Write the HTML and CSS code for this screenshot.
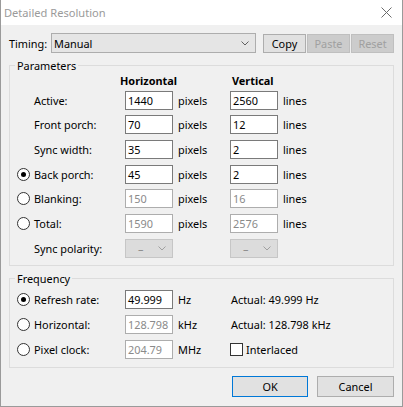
FILE: index.html
```html
<!DOCTYPE html>
<html>
<head>
<meta charset="utf-8">
<title>Detailed Resolution</title>
<link rel="stylesheet" href="styles.css">
</head>
<body>
<div class="window">
  <div class="titlebar">
    <span class="title">Detailed Resolution</span>
    <svg class="close" width="11" height="11" viewBox="0 0 11 11"><path d="M0.5 0.5 L10.5 10.5 M10.5 0.5 L0.5 10.5" stroke="#6b6b6b" stroke-width="1" fill="none"/></svg>
  </div>

  <div class="timing">
    <span class="timing-label">Timing:</span>
    <div class="combo combo-timing">
      <span class="combo-text">Manual</span>
      <svg class="chev" width="8" height="5" viewBox="0 0 8 5"><path d="M0.5 0.5 L4 4 L7.5 0.5" stroke="#606060" fill="none"/></svg>
    </div>
    <div class="tbtns">
      <div class="btn small">Copy</div>
      <div class="btn small disabled">Paste</div>
      <div class="btn small disabled">Reset</div>
    </div>
  </div>

  <fieldset class="group params">
    <legend>Parameters</legend>
    <div class="pgrid">
      <div></div><div></div><div class="head h1">Horizontal</div><div></div><div class="head h2">Vertical</div><div></div>

      <div></div><div class="lbl">Active:</div><div class="cell"><div class="field">1440</div></div><div class="unit">pixels</div><div class="cell"><div class="field">2560</div></div><div class="unit">lines</div>

      <div></div><div class="lbl">Front porch:</div><div class="cell"><div class="field">70</div></div><div class="unit">pixels</div><div class="cell"><div class="field">12</div></div><div class="unit">lines</div>

      <div></div><div class="lbl">Sync width:</div><div class="cell"><div class="field">35</div></div><div class="unit">pixels</div><div class="cell"><div class="field">2</div></div><div class="unit">lines</div>

      <div class="rcell"><span class="radio checked"></span></div><div class="lbl">Back porch:</div><div class="cell"><div class="field">45</div></div><div class="unit">pixels</div><div class="cell"><div class="field">2</div></div><div class="unit">lines</div>

      <div class="rcell"><span class="radio"></span></div><div class="lbl">Blanking:</div><div class="cell"><div class="field dis">150</div></div><div class="unit">pixels</div><div class="cell"><div class="field dis">16</div></div><div class="unit">lines</div>

      <div class="rcell"><span class="radio"></span></div><div class="lbl">Total:</div><div class="cell"><div class="field dis">1590</div></div><div class="unit">pixels</div><div class="cell"><div class="field dis">2576</div></div><div class="unit">lines</div>

      <div></div><div class="lbl">Sync polarity:</div>
      <div class="cell"><div class="combo combo-dis"><span class="dash">–</span><svg class="chev" width="8" height="5" viewBox="0 0 8 5"><path d="M0.5 0.5 L4 4 L7.5 0.5" stroke="#a0a0a0" fill="none"/></svg></div></div>
      <div></div>
      <div class="cell"><div class="combo combo-dis"><span class="dash">–</span><svg class="chev" width="8" height="5" viewBox="0 0 8 5"><path d="M0.5 0.5 L4 4 L7.5 0.5" stroke="#a0a0a0" fill="none"/></svg></div></div>
      <div></div>
    </div>
  </fieldset>

  <fieldset class="group freq">
    <legend>Frequency</legend>
    <div class="fgrid">
      <div class="rcell"><span class="radio checked"></span></div><div class="lbl">Refresh rate:</div><div class="cell"><div class="field">49.999</div></div><div class="unit">Hz</div><div class="actual">Actual: 49.999 Hz</div>

      <div class="rcell"><span class="radio"></span></div><div class="lbl">Horizontal:</div><div class="cell"><div class="field dis">128.798</div></div><div class="unit">kHz</div><div class="actual">Actual: 128.798 kHz</div>

      <div class="rcell"><span class="radio"></span></div><div class="lbl">Pixel clock:</div><div class="cell"><div class="field dis">204.79</div></div><div class="unit">MHz</div><div class="actual check"><span class="checkbox"></span><span>Interlaced</span></div>
    </div>
  </fieldset>

  <div class="actions">
    <div class="btn big default">OK</div>
    <div class="btn big cancel">Cancel</div>
  </div>
</div>
</body>
</html>
```

FILE: styles.css
```css
* { box-sizing: border-box; }
html, body { margin: 0; padding: 0; }
body {
  width: 403px;
  height: 407px;
  overflow: hidden;
  background: #f0f0f0;
  font-family: "Noto Sans", "Open Sans", "Liberation Sans", sans-serif;
  font-size: 10.9px;
  color: #000;
}
.window {
  width: 403px;
  height: 407px;
  border: 1px solid #9a9a9a;
  border-top: none;
  background: #f0f0f0;
}
.titlebar {
  height: 25px;
  background: #fff;
  display: flex;
  align-items: center;
  justify-content: space-between;
  padding: 0 10px 0 3px;
}
.title { color: #9a9a9a; font-size: 11.1px; }
.close { display: block; }

.timing {
  display: flex;
  align-items: center;
  margin-top: 8px;
  padding-left: 8px;
  height: 20px;
}
.timing-label { width: 42px; }
.combo {
  display: flex;
  align-items: center;
  justify-content: space-between;
  border: 1px solid #adadad;
  background: #e5e5e5;
}
.combo-timing { width: 205px; height: 20px; padding: 0 6px 0 2px; }
.chev { display: block; }
.tbtns { display: flex; gap: 1px; margin-left: 7px; }
.btn {
  display: flex;
  align-items: center;
  justify-content: center;
  border: 1px solid #adadad;
  background: #e1e1e1;
}
.small { width: 43px; height: 19px; }
.disabled { background: #cccccc; border-color: #bfbfbf; color: #a0a0a0; }

.group {
  margin: 4.5px 8px 0 8px;
  border: 1px solid #dcdcdc;
  min-width: 0;
  width: 385px;
}
.group legend {
  padding: 0 2px;
  margin-left: -2px;
  line-height: 15px;
  font-size: 10.9px;
}
.params { padding: 0 0 4px 7px; }
.freq { margin-top: 5px; padding: 2px 0 5px 7px; }

.pgrid {
  display: grid;
  grid-template-columns: 16px 92px 48px 57px 48px 1fr;
  grid-template-rows: 15.5px repeat(7, 24.67px);
  align-items: center;
}
.fgrid {
  display: grid;
  grid-template-columns: 16px 92px 48px 58px 1fr;
  grid-template-rows: repeat(3, 24.67px);
  align-items: center;
}
.head { font-weight: bold; white-space: nowrap; }
.h1 { margin-left: -5px; }
.h2 { margin-left: 2px; }
.lbl { white-space: nowrap; padding-left: 1px; }
.unit { padding-left: 5px; white-space: nowrap; }
.rcell { display: flex; align-items: center; }
.radio {
  width: 13px;
  height: 13px;
  border: 1px solid #333;
  border-radius: 50%;
  background: #fff;
  display: flex;
  align-items: center;
  justify-content: center;
}
.radio.checked::after {
  content: "";
  width: 5px;
  height: 5px;
  border-radius: 50%;
  background: #000;
}
.field {
  width: 48px;
  height: 19px;
  border: 1px solid #7a7a7a;
  background: #fff;
  padding-left: 2px;
  line-height: 17px;
}
.field.dis { color: #8a8a8a; border-color: #adadad; }
.combo-dis {
  width: 48px;
  height: 19px;
  background: #dcdcdc;
  border-color: #c6c6c6;
  color: #8a8a8a;
  padding: 0 6px 0 12px;
}
.dash { line-height: 17px; }
.actual { white-space: nowrap; }
.check { display: flex; align-items: center; gap: 3px; margin-left: -1px; }
.checkbox {
  width: 13px;
  height: 13px;
  border: 1px solid #333;
  background: #fff;
}

.actions {
  display: flex;
  justify-content: flex-end;
  gap: 9px;
  margin-top: 8.5px;
  padding-right: 8px;
}
.big { height: 21px; }
.default { width: 76px; border-color: #0078d7; }
.cancel { width: 77px; }
```
